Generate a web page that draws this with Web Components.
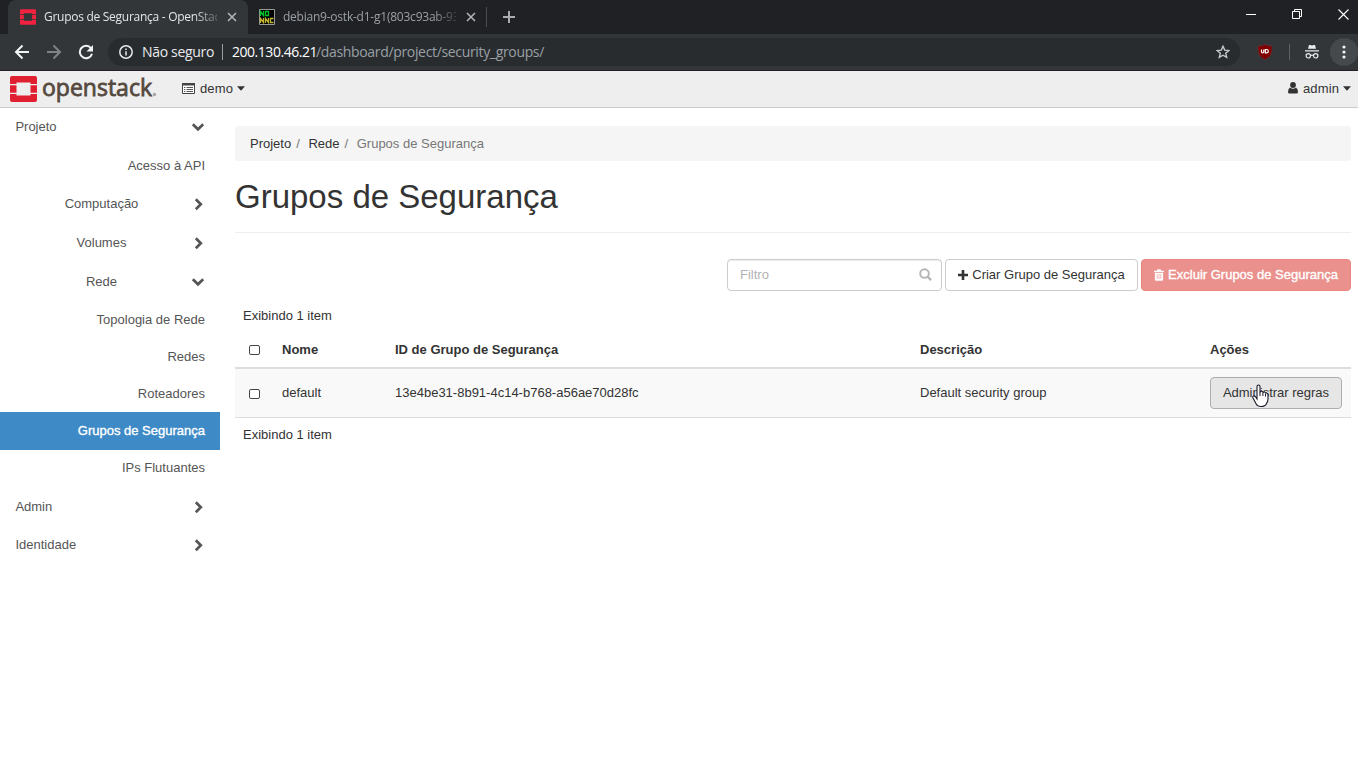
<!DOCTYPE html>
<html lang="pt-BR">
<head>
<meta charset="utf-8">
<title>Grupos de Segurança - OpenStack</title>
<style>
html,body{margin:0;padding:0;width:1358px;height:760px;overflow:hidden;background:#fff;font:13px/18px "Liberation Sans",Arial,sans-serif;color:#333}
</style>
</head>
<body>
<app-window></app-window>
<script>
const define = (name, css, html, ready) => customElements.define(name, class extends HTMLElement {
  constructor() {
    super();
    const t = document.createElement('template');
    t.innerHTML = `<style>*{box-sizing:border-box}svg{display:block;flex:none}${css}</style>${html}`;
    this.attachShadow({ mode: 'open' }).append(t.content.cloneNode(true));
  }
  connectedCallback() { if (ready) ready.call(this, this.shadowRoot); }
});

/* single line label whose tracking is adjusted to a set width (w, in px) */
define('fit-text', ':host{display:inline-block;white-space:pre;flex:none}span{display:inline-block}', '<span><slot></slot></span>', function (root) {
  const w = parseFloat(this.getAttribute('w'));
  const s = root.querySelector('span');
  const n = this.textContent.length;
  s.style.letterSpacing = (w - s.getBoundingClientRect().width) / n + 'px';
  this.style.width = w + 'px';
});

define('os-mark', ':host{display:block;color:#e01f30}svg{width:100%;height:100%}',
`<svg viewBox="0 0 27 26" fill="currentColor"><path d="M2 0H25A2 2 0 0 1 27 2V8H20.500V6.500H6.500V8H0V2A2 2 0 0 1 2 0ZM0 9.300H6.500V16.700H0ZM20.500 9.300H27V16.700H20.500ZM0 18H6.500V19.500H20.500V18H27V24A2 2 0 0 1 25 26H2A2 2 0 0 1 0 24Z"/></svg>`);

define('tab-close', ':host{display:block;flex:none;width:10px;height:10px}', `<svg width="10" height="10" viewBox="0 0 10 10" stroke="currentColor" stroke-width="1.500"><path d="M1 1l8 8M9 1l-8 8"/></svg>`);

define('browser-tab', `
:host{display:flex;align-items:center;height:34px;padding:0 10px 0 12px;font:12px/18px "Open Sans","Noto Sans",sans-serif;color:#9aa0a6;width:238px;flex:none}
:host([active]){background:#323639;border-radius:8px 8px 0 0;color:#e3e5e8;width:240px;padding-right:11px}
.t{flex:1;min-width:0;height:18px;overflow:hidden;margin:0 10px 0 8px;-webkit-mask:linear-gradient(90deg,#000 150px,transparent 180px);mask:linear-gradient(90deg,#000 150px,transparent 180px)}
tab-close{color:#b4b8bc}`,
`<slot name="icon"></slot><div class="t"><slot></slot></div><tab-close></tab-close>`);

define('tab-strip', `
:host{display:flex;height:34px;background:#202124;padding-left:8px;align-items:flex-start}
os-mark{width:16px;height:16px;color:#f0223f}
.sep{width:1px;height:20px;background:#4a4d51;margin:7px 0 0}
.plus{margin:11px 0 0 16px}.win{display:flex;margin-left:auto;color:#fff;padding:9px 9px 0 0}`,
`<browser-tab active><os-mark slot="icon"></os-mark><fit-text w="182">Grupos de Segurança - OpenStack</fit-text></browser-tab>
<browser-tab><svg slot="icon" width="16" height="16" viewBox="0 0 16 16" style="margin-left:-1px"><path d="M.5.5h15v15H.5z" fill="#000" stroke="#999"/><path d="M1.500 7V2.500L4.500 6.500V2M6.500 2.500h3v4h-3z" fill="none" stroke="#00c22b" stroke-width="1.300"/><path d="M1.500 14V9.500L4.500 13.500V9M6.500 14V9.500L9.500 13.500V9M14.500 9.500h-3v4h3" fill="none" stroke="#c2b431" stroke-width="1.300"/></svg><fit-text w="183">debian9-ostk-d1-g1(803c93ab-930</fit-text></browser-tab>
<div class="sep"></div>
<svg class="plus" width="12" height="12" viewBox="0 0 12 12" stroke="#a9adb1" stroke-width="2"><path d="M6 0v12M0 6h12"/></svg>
<div class="win"><svg width="10" height="10" viewBox="0 0 10 10" stroke="#fff"><path d="M0 5.500h10"/></svg>
<svg style="margin-left:36px" width="10" height="10" viewBox="0 0 10 10" fill="none" stroke="#fff"><path d="M.5 2.500h7v7h-7zM2.500 2.500v-2h7v7h-2"/></svg>
<svg style="margin-left:36px" width="11" height="11" viewBox="0 0 11 11" stroke="#fff" stroke-width="1.100"><path d="M.5.5l10 10M10.500.5l-10 10"/></svg></div>`);

define('address-bar', `
:host{display:flex;align-items:center;height:37px;background:#323639;border-bottom:1px solid #231f22;padding:0 0 0 14px;font:14px/20px "Open Sans","Noto Sans",sans-serif;color:#e8eaed}
.omni{display:flex;align-items:center;height:28px;border-radius:14px;background:#282c2f;width:1133px;margin-left:14px;padding:0 10px 0 11px}
.omni i{width:1px;height:16px;background:#9a9da1;margin:0 9px 0 8px}
.p{color:#9aa0a6}.star{margin-left:auto}
.s{width:1px;height:16px;background:#5c6064;margin:0 15px 0 16px}
.menu{width:28px;height:28px;border-radius:50%;background:#45494c;display:flex;align-items:center;justify-content:center;margin-left:11px}`,
`<svg width="16" height="16" viewBox="0 0 16 16" fill="none" stroke="#f1f3f4" stroke-width="2"><path d="M15 8H2.500M8.500 1.500L2 8l6.500 6.500"/></svg>
<svg style="margin-left:16px" width="16" height="16" viewBox="0 0 16 16" fill="none" stroke="#7f8386" stroke-width="2"><path d="M1 8h12.500M7.500 1.500L14 8l-6.500 6.500"/></svg>
<svg style="margin-left:16px" width="16" height="16" viewBox="0 0 16 16"><path d="M13 4.300A6.200 6.200 0 1 0 14 9.800" fill="none" stroke="#f1f3f4" stroke-width="2"/><path d="M15 1v6.500H8.500z" fill="#f1f3f4"/></svg>
<div class="omni"><svg width="14" height="14" viewBox="0 0 14 14" fill="none" stroke="#e8eaed" stroke-width="1.500"><circle cx="7" cy="7" r="6.200"/><path d="M7 6.200v4.300M7 3.400v1.600"/></svg>
<fit-text w="72" style="margin-left:9px">Não seguro</fit-text><i></i><fit-text w="85" style="color:#fff;margin-right:-1px">200.130.46.21</fit-text><fit-text class="p" w="228">/dashboard/project/security_groups/</fit-text>
<svg class="star" width="14" height="14" viewBox="0 0 14 14" fill="none" stroke="#c6c9cc" stroke-width="1.400"><path d="M7 1.300l1.700 3.800 4.200.4-3.200 2.800 1 4.100L7 10.200l-3.700 2.200 1-4.100L1.100 5.500l4.200-.4z"/></svg></div>
<svg style="margin-left:17px" width="16" height="16" viewBox="0 0 16 16"><path d="M8 .3c2 1.200 4 1.700 7 1.700 0 6.500 0 10-7 13.700C1 12 1 8.500 1 2 4 2 6 1.500 8 .3z" fill="#800000" stroke="#62353a" stroke-width=".8"/><path d="M4.500 5.400v2.400q0 1.100 1.100 1.100t1.200-1.100V5.400M8.300 5.500v3.400h1.300q1.700 0 1.700-1.700T9.600 5.500z" fill="none" stroke="#fff" stroke-width="1.200"/></svg>
<div class="s"></div>
<svg width="14" height="16" viewBox="0 0 14 16" fill="#e8eaed"><path d="M4 1h1.200l1.800.6L8.800 1H10l1 3.800H3zM0 6.200h14v1.400H0z"/><g fill="none" stroke="#e8eaed" stroke-width="1.200"><circle cx="3.300" cy="11.800" r="2.200"/><circle cx="10.700" cy="11.800" r="2.200"/><path d="M5.600 11.600q1.400-.9 2.800 0"/></g></svg>
<div class="menu"><svg width="4" height="14" viewBox="0 0 4 14" fill="#f1f3f4"><circle cx="2" cy="2" r="1.600"/><circle cx="2" cy="7" r="1.600"/><circle cx="2" cy="12" r="1.600"/></svg></div>`);

define('caret-down', ':host{display:block;margin-left:4px}', `<svg width="8" height="5" viewBox="0 0 8 5"><path d="M0 .3h8L4 4.700z" fill="#333"/></svg>`);

define('top-bar', `
:host{display:flex;align-items:center;height:37px;background:#eee;border-bottom:1px solid #ccc;padding:0 7px 2px 10px}
os-mark{width:27px;height:26px;margin-top:1px}.logo{margin-left:5px}
.m{display:flex;align-items:center}.user{margin-left:auto}fit-text{position:relative;top:1px}`,
`<os-mark></os-mark>
<svg class="logo" width="118" height="35" viewBox="0 0 118 35"><text x="0" y="24.500" font-family="Open Sans,Noto Sans,sans-serif" font-size="23.500" fill="#55493f" stroke="#55493f" stroke-width=".8" textLength="110" lengthAdjust="spacingAndGlyphs">openstack</text><circle cx="112.500" cy="23.500" r="1.700" fill="#aaa49e"/></svg>
<div class="m" style="margin-left:22px"><svg width="13" height="11" viewBox="0 0 13 11"><path d="M.5.5h12v10H.5z" fill="#fff" stroke="#444"/><path d="M0 0h13v2.500H0z" fill="#444"/><path d="M2 4.500h1.300M2 6.500h1.300M2 8.500h1.300M4.500 4.500H11M4.500 6.500H11M4.500 8.500H11" stroke="#555"/></svg><fit-text w="33" style="margin-left:5px">demo</fit-text><caret-down></caret-down></div>
<div class="m user"><svg width="10" height="12" viewBox="0 0 10 12" fill="#333"><circle cx="5" cy="3" r="2.900"/><path d="M2 5.500Q0 6.500 0 10q0 1.500 1.500 1.500h7Q10 11.500 10 10 10 6.500 8 5.500 5 8 2 5.500z"/></svg><fit-text w="36" style="margin-left:5px">admin</fit-text><caret-down></caret-down></div>`);

define('side-item', `
:host{display:flex;align-items:center;height:38px;padding:0 15px;color:#555}
:host([leaf]){justify-content:flex-end}
:host([tall]){height:39px}:host([short]){height:37px}
:host([active]){background:#3d8ac7;color:#fff}
:host([active]) .t{-webkit-text-stroke:.35px #fff}
:host([sub]) .t{width:173px;text-align:center}
.t{padding-bottom:1px}
:host([tall]) .t,:host([lower]) .t{padding:1px 0 0}
:host(:not([leaf]):not([sub])) .t{padding-left:.4px}
svg{display:none;margin-left:auto;margin-right:1px}
:host([arrow=right]) .r,:host([arrow=down]) .d{display:block}`,
`<span class="t"><slot></slot></span>
<svg class="r" width="10" height="14" viewBox="0 0 10 14" fill="none" stroke="#555" stroke-width="2.700"><path d="M1.800 2.200L6.800 7.200 1.800 12.200"/></svg>
<svg class="d" width="14" height="10" viewBox="0 0 14 10" fill="none" stroke="#555" stroke-width="2.700" style="margin-right:0"><path d="M1.800 2.300L7 7.300l5.200-5"/></svg>`);

define('side-nav', ':host{display:block;width:220px;flex:none}',
`<side-item arrow="down">Projeto</side-item>
<side-item leaf tall>Acesso à API</side-item>
<side-item sub arrow="right">Computação</side-item>
<side-item sub tall arrow="right">Volumes</side-item>
<side-item sub tall arrow="down">Rede</side-item>
<side-item leaf short lower>Topologia de Rede</side-item>
<side-item leaf short lower>Redes</side-item>
<side-item leaf short lower>Roteadores</side-item>
<side-item leaf active>Grupos de Segurança</side-item>
<side-item leaf short>IPs Flutuantes</side-item>
<side-item tall arrow="right">Admin</side-item>
<side-item arrow="right">Identidade</side-item>`);

define('bread-crumb', ':host{display:flex;height:35px;align-items:center;background:#f5f5f5;border-radius:3px;padding-left:15px}i{font-style:normal;color:#777;margin:0 8.600px 0 5px}.c{color:#777}',
`<span>Projeto</span><i>/</i><span>Rede</span><i>/</i><span class="c">Grupos de Segurança</span>`);

define('action-button', `
:host{display:flex;align-items:center;justify-content:center;height:32px;border:1px solid #ccc;border-radius:4px;background:#fff;padding-bottom:1px;white-space:nowrap}
:host([danger]){background:#eb918d;border-color:#ea8580;color:#fff;-webkit-text-stroke:.35px #fff}
:host([hover]){background:#e6e6e6;border-color:#adadad}
::slotted(svg){margin-right:4px}`, `<slot name="icon"></slot><slot></slot>`);

define('filter-box', ':host{display:flex;align-items:center;width:215px;height:32px;border:1px solid #ccc;border-radius:4px;box-shadow:inset 0 1px 1px rgba(0,0,0,.075);padding:0 9px 1px 12px;color:#b3b3b3;justify-content:space-between}',
`<span>Filtro</span><svg width="13" height="13" viewBox="0 0 13 13" fill="none" stroke="#b5b5b5" stroke-width="1.900"><circle cx="5.500" cy="5.500" r="4.300"/><path d="M8.700 8.700l3.400 3.400" stroke-width="2.300"/></svg>`);

define('check-box', ':host{display:block;width:11px;height:10px;border:1px solid #444;border-radius:2px;background:#fff;margin-left:14px}', '');

define('data-row', `
:host{display:grid;grid-template-columns:47px 113px 525px 290px 141px;align-items:center;height:49px;background:#f9f9f9;border-bottom:1px solid #ddd}
:host([head]){height:36px;background:#fff;font-weight:bold;border-bottom:2px solid #ddd;padding-bottom:1px}
check-box{margin-top:1px}`,
`<check-box></check-box><slot></slot>`);

define('mouse-hand', ':host{position:absolute;left:42px;top:7px;width:17px;height:24px}',
`<svg width="17" height="24" viewBox="0 0 17 24"><path d="M5 15V2.500a1.500 1.500 0 0 1 3 0V8.500q.3-1.300 1.500-1.200 1.300.1 1.400 1.500.4-1 1.500-.8 1.200.2 1.200 1.500.4-.8 1.300-.5 1.100.3 1.100 1.700V15q0 2.500-1.500 4.500-1.200 3-5.500 3-3.500 0-4.800-2.500L1 14q-.7-1.500.5-2 1.200-.4 2 .8z" fill="#fff" stroke="#1a1a28" stroke-width="1.100"/><path d="M8 8v4M10.900 9v3M13.500 10v2.500" stroke="#1a1a28"/></svg>`);

define('groups-page', `
:host{display:block;width:1116px;margin:18px 0 0 15px}
h1{font-size:33px;line-height:40px;font-weight:400;margin:16px 0 0;height:40px}
.rule{height:1px;background:#eee;margin-top:15px}
.tools{display:flex;gap:3px;justify-content:flex-end;margin-top:26px}
.count{padding-left:8px;height:18px}
.act{position:relative}`,
`<bread-crumb></bread-crumb>
<h1>Grupos de Segurança</h1><div class="rule"></div>
<div class="tools"><filter-box></filter-box>
<action-button style="width:193px"><svg slot="icon" width="10" height="10" viewBox="0 0 10 10" fill="#333"><path d="M3.700 0h2.600v3.700H10v2.600H6.300V10H3.700V6.300H0V3.700h3.700z"/></svg>Criar Grupo de Segurança</action-button>
<action-button danger style="width:210px"><svg slot="icon" width="10" height="12" viewBox="0 0 10 12"><path d="M0 1.700h2.700L3.500.3h3l.8 1.400H10v1.500H0zM.9 4h8.200v6.500q0 1.200-1.100 1.200H2Q.9 11.700.9 10.500z" fill="#fff"/><path d="M3.200 5v5M5 5v5M6.800 5v5" stroke="#eb918d" stroke-width=".6"/></svg>Excluir Grupos de Segurança</action-button></div>
<div class="count" style="margin:16px 0 8px">Exibindo 1 item</div>
<data-row head><span>Nome</span><span>ID de Grupo de Segurança</span><span>Descrição</span><span>Ações</span></data-row>
<data-row><span>default</span><span>13e4be31-8b91-4c14-b768-a56ae70d28fc</span><span>Default security group</span><div class="act"><action-button hover style="width:132px">Administrar regras</action-button><mouse-hand></mouse-hand></div></data-row>
<div class="count" style="margin-top:8px">Exibindo 1 item</div>`);

define('app-window', ':host{display:flex;flex-direction:column;width:1358px;height:760px;background:#fff}.body{display:flex}',
`<tab-strip></tab-strip><address-bar></address-bar><top-bar></top-bar><div class="body"><side-nav></side-nav><groups-page></groups-page></div>`);
</script>
</body>
</html>
